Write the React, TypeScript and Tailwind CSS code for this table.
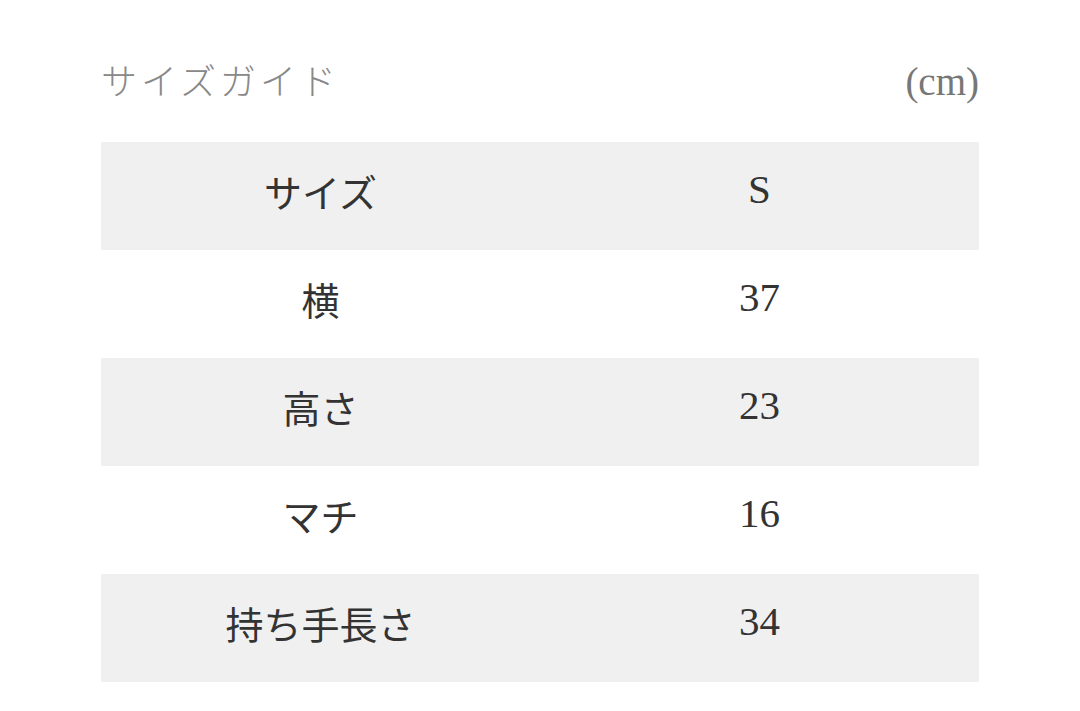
import React from 'react';

interface SizeRow {
  label: string;
  value: string;
}

const rows: SizeRow[] = [
  { label: 'サイズ', value: 'S' },
  { label: '横', value: '37' },
  { label: '高さ', value: '23' },
  { label: 'マチ', value: '16' },
  { label: '持ち手長さ', value: '34' },
];

const jp = { fontFamily: '"Noto Sans CJK JP", "Noto Sans", sans-serif' };
const serif = { fontFamily: '"Liberation Serif", "Noto Sans CJK JP", serif' };

const App: React.FC = () => {
  return (
    <div className="min-h-[711px] w-[1080px] bg-white px-[101px] pt-[50px]">
      <div className="flex items-end justify-between h-[50px]">
        <h2 className="text-[36px] leading-none tracking-[4px] text-[#888] font-light pb-[3px]" style={jp}>
          サイズガイド
        </h2>
        <span className="text-[39px] leading-none text-[#777] -mb-[1px]" style={serif}>
          (cm)
        </span>
      </div>

      <div className="mt-[42px]">
        {rows.map((row, i) => (
          <div
            key={row.label}
            className={`grid grid-cols-2 h-[108px] items-center pb-[12px] ${i % 2 === 0 ? 'bg-[#f0f0f0]' : 'bg-white'}`}
          >
            <div className="text-center text-[38px] text-[#333]" style={jp}>
              {row.label}
            </div>
            <div className="text-center text-[41px] text-[#333]" style={serif}>
              {row.value}
            </div>
          </div>
        ))}
      </div>
    </div>
  );
};

export default App;
